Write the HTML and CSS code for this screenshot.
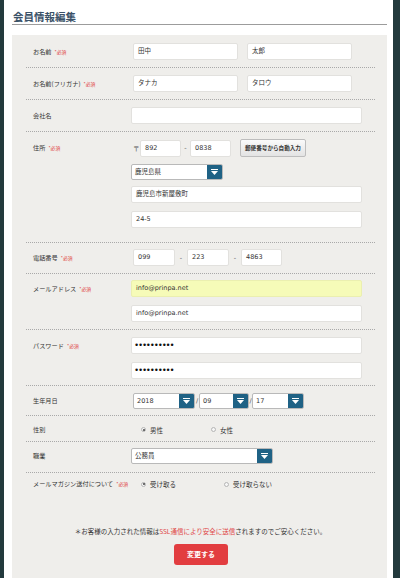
FILE: index.html
```html
<!DOCTYPE html>
<html lang="ja">
<head>
<meta charset="utf-8">
<title>会員情報編集</title>
<link rel="stylesheet" href="styles.css">
</head>
<body>
<div class="page">
  <div class="panel">
    <h1 class="title">会員情報編集</h1>
    <div class="form">
      <div class="row r1">
        <div class="label">お名前<span class="req">*必須</span></div>
        <div class="value">
          <div class="line in2">
            <span class="field w105">田中</span>
            <span class="field w105 ml9">太郎</span>
          </div>
        </div>
      </div>
      <div class="row r2">
        <div class="label">お名前(フリガナ)<span class="req">*必須</span></div>
        <div class="value">
          <div class="line in2">
            <span class="field w105">タナカ</span>
            <span class="field w105 ml9">タロウ</span>
          </div>
        </div>
      </div>
      <div class="row r3">
        <div class="label">会社名</div>
        <div class="value">
          <span class="field wfull"></span>
        </div>
      </div>
      <div class="row r4">
        <div class="label">住所<span class="req">*必須</span></div>
        <div class="value">
          <div class="line in2">
            <span class="mark">〒</span>
            <span class="field w41">892</span>
            <span class="dash w9">-</span>
            <span class="field w41">0838</span>
            <span class="zipbtn">郵便番号から自動入力</span>
          </div>
          <div class="select w92 mt7">
            <span class="stxt">鹿児島県</span>
            <span class="arrow"><svg width="7" height="6" viewBox="0 0 7 6"><rect x="0" y="0" width="7" height="1" fill="#fff"/><polygon points="0,2 7,2 3.5,6" fill="#fff"/></svg></span>
          </div>
          <span class="field wfull mt6">鹿児島市新屋敷町</span>
          <span class="field wfull mt8">24-5</span>
        </div>
      </div>
      <div class="row r5">
        <div class="label">電話番号<span class="req">*必須</span></div>
        <div class="value">
          <div class="line in2">
            <span class="field w42">099</span>
            <span class="dash w12">-</span>
            <span class="field w42">223</span>
            <span class="dash w12">-</span>
            <span class="field w41">4863</span>
          </div>
        </div>
      </div>
      <div class="row r6">
        <div class="label">メールアドレス<span class="req">*必須</span></div>
        <div class="value">
          <span class="field wfull filled">info@prinpa.net</span>
          <span class="field wfull mt8">info@prinpa.net</span>
        </div>
      </div>
      <div class="row r7">
        <div class="label">パスワード<span class="req">*必須</span></div>
        <div class="value">
          <span class="field wfull pw">••••••••••</span>
          <span class="field wfull pw mt8">••••••••••</span>
        </div>
      </div>
      <div class="row r8">
        <div class="label lab16">生年月日</div>
        <div class="value">
          <div class="line in2">
            <div class="select w62">
              <span class="stxt">2018</span>
              <span class="arrow"><svg width="7" height="6" viewBox="0 0 7 6"><rect x="0" y="0" width="7" height="1" fill="#fff"/><polygon points="0,2 7,2 3.5,6" fill="#fff"/></svg></span>
            </div>
            <span class="slash w4">/</span>
            <div class="select w50">
              <span class="stxt">09</span>
              <span class="arrow"><svg width="7" height="6" viewBox="0 0 7 6"><rect x="0" y="0" width="7" height="1" fill="#fff"/><polygon points="0,2 7,2 3.5,6" fill="#fff"/></svg></span>
            </div>
            <span class="slash w3">/</span>
            <div class="select w52">
              <span class="stxt">17</span>
              <span class="arrow"><svg width="7" height="6" viewBox="0 0 7 6"><rect x="0" y="0" width="7" height="1" fill="#fff"/><polygon points="0,2 7,2 3.5,6" fill="#fff"/></svg></span>
            </div>
          </div>
        </div>
      </div>
      <div class="row r9">
        <div class="label lab13">性別</div>
        <div class="value">
          <div class="radios">
            <span class="radio w70"><span class="dot on"></span>男性</span>
            <span class="radio"><span class="dot"></span>女性</span>
          </div>
        </div>
      </div>
      <div class="row r10">
        <div class="label lab16">職業</div>
        <div class="value">
          <div class="select w142">
            <span class="stxt">公務員</span>
            <span class="arrow"><svg width="7" height="6" viewBox="0 0 7 6"><rect x="0" y="0" width="7" height="1" fill="#fff"/><polygon points="0,2 7,2 3.5,6" fill="#fff"/></svg></span>
          </div>
        </div>
      </div>
      <div class="row r11">
        <div class="label lab12">メールマガジン送付について<span class="req">*必須</span></div>
        <div class="value">
          <div class="radios rad12">
            <span class="radio w83"><span class="dot on"></span>受け取る</span>
            <span class="radio"><span class="dot"></span>受け取らない</span>
          </div>
        </div>
      </div>
      <p class="note">＊お客様の入力された情報は<span class="red">SSL通信により安全に送信</span>されますのでご安心ください。</p>
      <div class="submit-wrap"><span class="submit">変更する</span></div>
    </div>
  </div>
</div>
</body>
</html>
```

FILE: styles.css
```css
html, body {
  margin: 0;
  padding: 0;
}
body {
  background: #233a3d;
  font-family: "Noto Sans CJK JP", sans-serif;
  color: #333;
}
.page {
  width: 400px;
  height: 578px;
  overflow: hidden;
  display: flex;
}
.panel {
  margin-left: 4px;
  width: 389px;
  height: 578px;
  box-sizing: border-box;
  background: #fff;
  padding: 0 6px 0 8px;
  display: flex;
  flex-direction: column;
}
.title {
  margin: 0 0 10px 0;
  padding: 10px 0 0 1px;
  font-size: 10.5px;
  line-height: 14px;
  font-weight: bold;
  color: #3b5268;
  border-bottom: 1px solid #9c9c9c;
}
.form {
  flex: 1;
  background: #efeeeb;
  padding: 0 12px 0 14px;
}
.row {
  display: flex;
  padding-left: 7px;
  border-bottom: 1px dotted #a9a9a9;
}
.r1 { padding-top: 8px; padding-bottom: 7px; }
.r2 { padding-top: 7px; padding-bottom: 7px; }
.r3 { padding-top: 7px; padding-bottom: 7px; }
.r4 { padding-top: 7px; padding-bottom: 14px; }
.r5 { padding-top: 6px; padding-bottom: 7px; }
.r6 { padding-top: 6px; padding-bottom: 7px; }
.r7 { padding-top: 7px; padding-bottom: 6px; }
.r8 { padding-top: 7px; padding-bottom: 6px; }
.r9 { padding-top: 7px; padding-bottom: 5px; }
.r10 { padding-top: 6px; padding-bottom: 8px; }
.r11 { padding-top: 5px; padding-bottom: 0; border-bottom: none; }

.label {
  width: 98px;
  flex: none;
  font-size: 6.2px;
  line-height: 17px;
  color: #333;
  white-space: nowrap;
}
.lab16 { line-height: 16px; }
.lab13 { line-height: 13px; }
.lab12 { line-height: 12px; }
.req {
  color: #e03c3c;
  font-size: 4.8px;
  margin-left: 3px;
}
.value {
  display: flex;
  flex-direction: column;
  align-items: flex-start;
}
.line {
  display: flex;
  align-items: center;
}
.in2 { padding-left: 2px; }

.field {
  display: block;
  height: 17px;
  box-sizing: border-box;
  background: #fff;
  border: 1px solid #e2e1de;
  border-radius: 2px;
  padding: 0 4px;
  font-family: "DejaVu Sans", "Noto Sans CJK JP", sans-serif;
  font-size: 6.5px;
  line-height: 15px;
  color: #333;
  white-space: nowrap;
  overflow: hidden;
}
.filled { background: #f6fbb8; border-color: #ebefb0; }
.pw {
  font-family: "Liberation Sans", sans-serif;
  font-size: 9px;
  letter-spacing: 0.8px;
  color: #111;
  padding-left: 3px;
}
.wfull { width: 231px; }
.w105 { width: 105px; }
.w41 { width: 41px; }
.w42 { width: 42px; }
.ml9 { margin-left: 9px; }
.mt6 { margin-top: 6px; }
.mt7 { margin-top: 7px; }
.mt8 { margin-top: 8px; }

.mark {
  width: 7px;
  font-size: 6.5px;
  color: #555;
}
.dash, .slash {
  text-align: center;
  font-size: 6.5px;
  color: #555;
  font-family: "DejaVu Sans", sans-serif;
}
.w9 { width: 9px; }
.w12 { width: 12px; }
.w4 { width: 4px; }
.w3 { width: 3px; }

.zipbtn {
  margin-left: 9px;
  width: 66px;
  height: 18px;
  box-sizing: border-box;
  border: 1px solid #bdbdbd;
  border-radius: 2px;
  background: linear-gradient(#fafafa, #e3e3e3);
  font-size: 5.6px;
  font-weight: bold;
  line-height: 16px;
  text-align: center;
  color: #333;
  white-space: nowrap;
}

.select {
  display: flex;
  height: 16px;
  box-sizing: border-box;
  border: 1px solid #b9b9b9;
  border-radius: 2px;
  background: #fff;
  overflow: hidden;
}
.w92 { width: 92px; }
.w62 { width: 62px; }
.w50 { width: 50px; }
.w52 { width: 52px; }
.w142 { width: 142px; }
.stxt {
  flex: 1;
  padding-left: 3px;
  font-family: "DejaVu Sans", "Noto Sans CJK JP", sans-serif;
  font-size: 6.5px;
  line-height: 14px;
  color: #333;
}
.arrow {
  width: 15px;
  flex: none;
  background: #1f6285;
  display: flex;
  align-items: center;
  justify-content: center;
}

.radios {
  display: flex;
  align-items: center;
  height: 13px;
  padding-left: 10px;
}
.rad12 { height: 12px; }
.radio {
  display: flex;
  align-items: center;
  font-size: 6.5px;
  color: #333;
  white-space: nowrap;
}
.w70 { width: 70px; }
.w83 { width: 83px; }
.dot {
  width: 5px;
  height: 5px;
  box-sizing: border-box;
  border: 1px solid #b5b5b5;
  border-radius: 50%;
  background: #f6f6f6;
  margin-right: 4px;
  display: flex;
  align-items: center;
  justify-content: center;
}
.dot.on::after {
  content: "";
  width: 2px;
  height: 2px;
  border-radius: 50%;
  background: #444;
}

.note {
  margin: 36px 0 0 0;
  text-align: center;
  font-size: 6.5px;
  line-height: 10px;
  color: #333;
  white-space: nowrap;
}
.red { color: #e04848; }
.submit-wrap {
  display: flex;
  justify-content: center;
  margin-top: 8px;
  padding-left: 1px;
}
.submit {
  width: 54px;
  height: 21px;
  border-radius: 3px;
  background: #e23d40;
  color: #fff;
  font-size: 7px;
  font-weight: bold;
  line-height: 21px;
  text-align: center;
}
```
